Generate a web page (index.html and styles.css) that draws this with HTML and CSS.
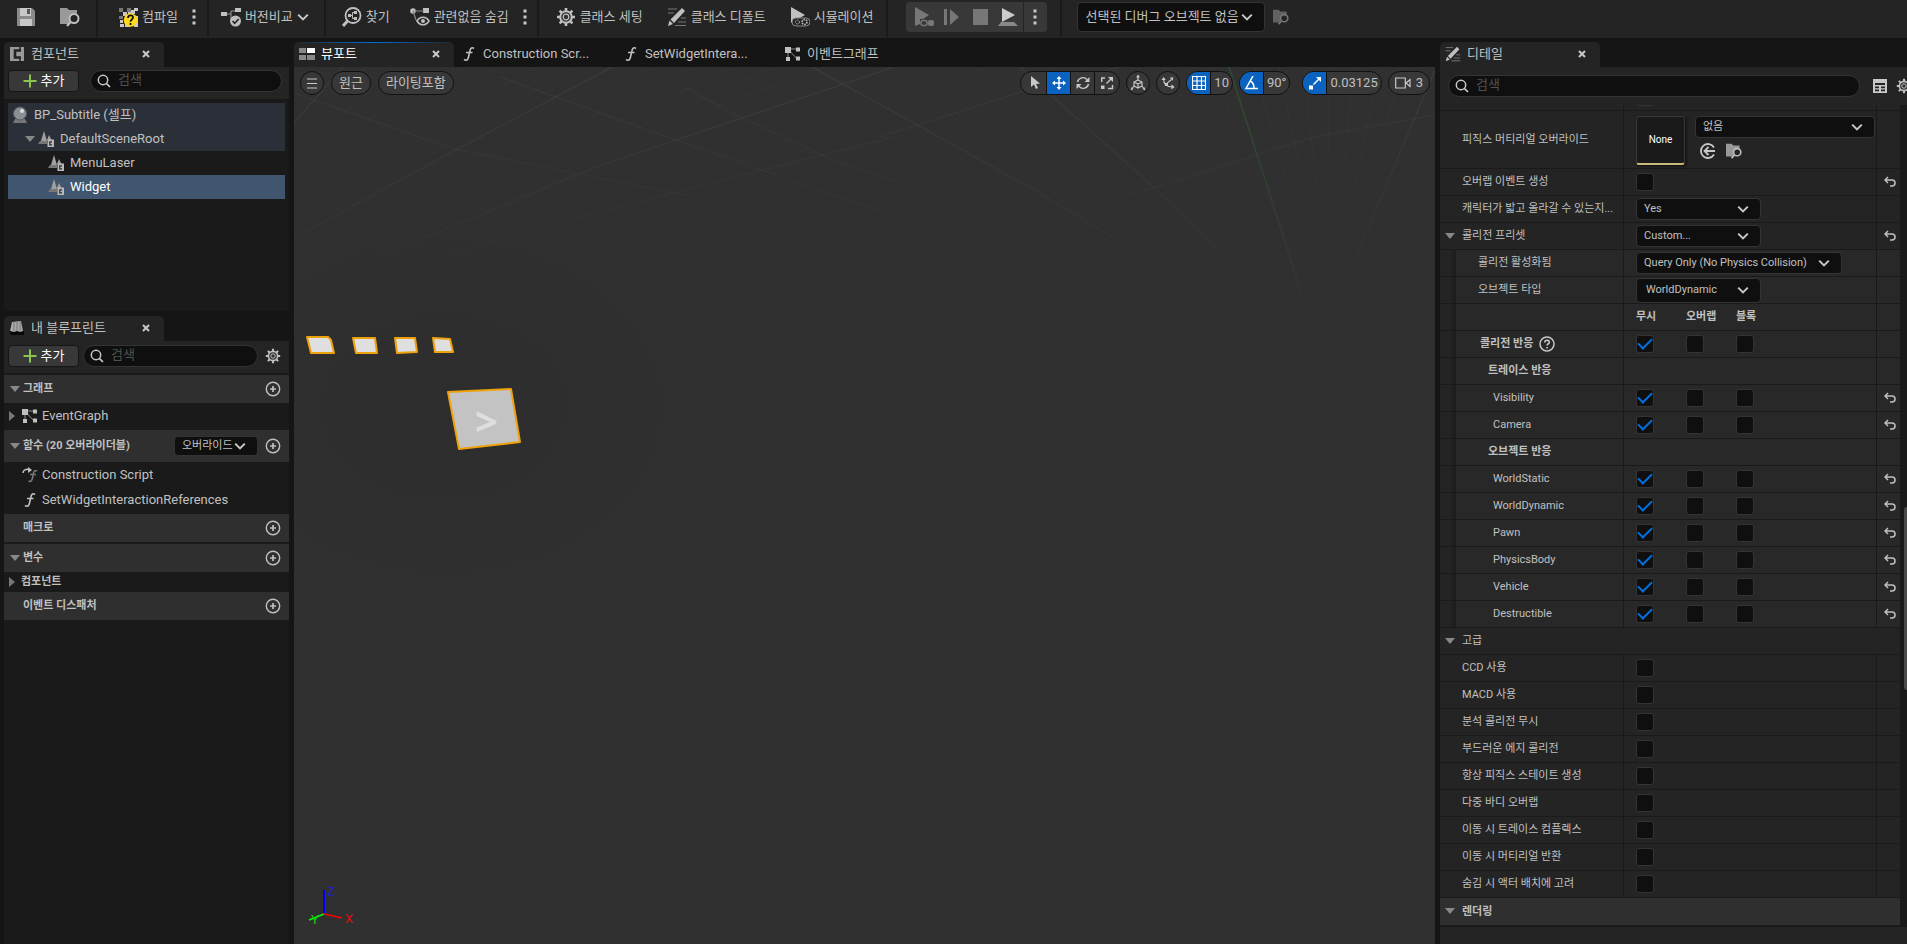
FILE: index.html
```html
<!DOCTYPE html>
<html lang="ko">
<head>
<meta charset="utf-8">
<title>BP_Subtitle</title>
<link rel="stylesheet" href="styles.css">
</head>
<body>
<svg class="defs" aria-hidden="true">
  <symbol id="save" viewBox="0 0 20 20"><path d="M1 1h15l3 3v15H1z" fill="#8a8a8a"/><path d="M4 1h11v8H4zM4 12h12v7H4z" fill="#c8c8c8"/><path d="M11 2h3v5h-3z" fill="#555"/></symbol>
  <symbol id="browse" viewBox="0 0 20 20"><path d="M0 1h7l2 2h8v4a6 6 0 0 0-7 9l-1 1H0z" fill="currentColor" opacity=".75"/><circle cx="14" cy="11.500" r="4.500" fill="#242424" stroke="currentColor" stroke-width="2"/><path d="M10.500 15 7 19" stroke="currentColor" stroke-width="2.200"/></symbol>
  <symbol id="compile" viewBox="0 0 20 20"><path d="M1 1h4v4H1zM9 1h4v4H9zM1 9h4v3H1z" fill="#777"/><path d="M5 5h4v4H5zM13 3h4v4h-4zM16 1h4v3h-4zM16 9h4v11h-4zM2 17h4v3H2zM7 16h5v4H7zM2 13h3v3H2zM10 5h3v3h-3z" fill="#c8c8c8"/><circle cx="12.500" cy="13" r="6.800" fill="#ffd91a"/><path d="M10 11c0-3.500 5-3.500 5-.5 0 2-2.500 2-2.500 4.200M12.500 16v2" fill="none" stroke="#111" stroke-width="1.800"/></symbol>
  <symbol id="diff" viewBox="0 0 20 20"><path d="M5 7h5V4h5M10 7v5" fill="none" stroke="#999"/><path d="M0 5h6v4H0zM14 1h6v4h-6z" fill="currentColor"/><circle cx="14.500" cy="14" r="5.500" fill="currentColor"/><path d="m11.500 14 2.200 2.300 4-4.300" fill="none" stroke="#222" stroke-width="1.700"/></symbol>
  <symbol id="find" viewBox="0 0 20 20"><circle cx="11" cy="8.500" r="7.500" fill="none" stroke="currentColor" stroke-width="1.800"/><path d="M5.500 14 1 19" stroke="currentColor" stroke-width="3"/><path d="M6 7h3v3H6zM12 4h3v3h-3zM12 10h3v3h-3z" fill="currentColor"/><path d="M8 8.500h2.500v-3H13M10.500 8.500v3H13" fill="none" stroke="currentColor"/></symbol>
  <symbol id="hide" viewBox="0 0 20 20"><circle cx="3" cy="4" r="2.800" fill="currentColor"/><path d="M13 1h6v5h-6z" fill="currentColor"/><path d="M3 4h11M3 4l3 9" stroke="#888" stroke-width="1.200"/><path d="M7 14c3-5 9-5 12 0-3 5-9 5-12 0z" fill="#242424" stroke="currentColor" stroke-width="1.600"/><circle cx="13" cy="14" r="2" fill="currentColor"/></symbol>
  <symbol id="gear" viewBox="0 0 20 20"><g stroke="currentColor" stroke-width="2.600"><path d="M10 1v18M1 10h18M3.600 3.600l12.800 12.800M16.400 3.600 3.600 16.400"/></g><circle cx="10" cy="10" r="5.800" fill="#333" stroke="currentColor" stroke-width="2"/><circle cx="10" cy="10" r="2.800" fill="none" stroke="currentColor" stroke-width="1.200"/></symbol>
  <symbol id="pencil" viewBox="0 0 20 20"><path d="M1 2h9M1 6h6M14 11h5M11 15h8M8 18.500h11" stroke="#777" stroke-width="1.200"/><path d="M15 1l3 3L7 16l-3.500-3.500z" fill="currentColor"/><path d="M2.500 13.500 6 17l-5 2z" fill="currentColor"/></symbol>
  <symbol id="simulate" viewBox="0 0 20 20"><path d="M1 0l14 8-14 8z" fill="currentColor"/><rect x="2" y="11" width="18" height="8" rx="4" fill="#242424" stroke="#888"/><g fill="none" stroke="currentColor"><circle cx="7.500" cy="15" r="2" stroke-dasharray="1.600 1"/><circle cx="14.500" cy="15" r="2.500" stroke-dasharray="1.600 1" stroke-width="1.500"/></g></symbol>
  <symbol id="play" viewBox="0 0 20 20"><path d="M1 0l14 8-6 4H6v5l-5 2z" fill="#777"/><rect x="7" y="13.500" width="6" height="5" rx="2" fill="#383838" stroke="#777" stroke-width="1.500"/><rect x="14" y="13" width="6" height="6" rx="2" fill="#777"/></symbol>
  <symbol id="step" viewBox="0 0 20 20"><path d="M2 2h3v16H2zM8 2l9 8-9 8z" fill="#777"/></symbol>
  <symbol id="stop" viewBox="0 0 20 20"><path d="M3 2h15v16H3z" fill="#777"/></symbol>
  <symbol id="eject" viewBox="0 0 20 20"><path d="M4 1l13 7-13 7z" fill="#ccc"/><path d="M0 19l3-4h13l4 4z" fill="#888"/></symbol>
  <symbol id="dots" viewBox="0 0 4 20"><path d="M.5 2.500h3v3h-3zM.5 8.500h3v3h-3zM.5 14.500h3v3h-3z" fill="#c8c8c8"/></symbol>
  <symbol id="chev" viewBox="0 0 10 10"><path d="M1 3l4 4 4-4" fill="none" stroke="#c8c8c8" stroke-width="1.700"/></symbol>
  <symbol id="x" viewBox="0 0 8 8"><path d="M1 1l6 6M7 1 1 7" stroke="#c8c8c8" stroke-width="2"/></symbol>
  <symbol id="comp" viewBox="0 0 16 16"><path d="M1 1h14v14H1z" fill="#999"/><path d="M12 4.500H6v7h6" fill="none" stroke="#242424" stroke-width="2.600"/><path d="M11 0v5M11 11v5" stroke="#242424" stroke-width="1.500"/></symbol>
  <symbol id="book" viewBox="0 0 16 16"><path d="M0 11h15v4H2z" fill="#080808"/><path d="M3 2l9-1 2 10-3 1-3-1-3 1-4-1z" fill="#aaa"/><path d="M5 2v9M8 1.500V11M11 1.500V11" stroke="#777"/></symbol>
  <symbol id="view" viewBox="0 0 16 16"><path d="M0 2h7v5H0zM0 9h7v5H0zM8 9h8v5H8z" fill="#888"/><path d="M8 2h8v5H8z" fill="#fff"/></symbol>
  <symbol id="func" viewBox="0 0 16 16"><path d="M13 2.500c-2-1.500-3.500-.5-4 2L7.500 11c-.5 3-2 4-4.500 2.500M5 6.500h6.500" fill="none" stroke="currentColor" stroke-width="1.600"/></symbol>
  <symbol id="cfunc" viewBox="0 0 16 16"><path d="M15 4c-2-1-3 0-3.500 2l-1 5c-.5 3-2 4-4 3M8 7.500h6" fill="none" stroke="#777" stroke-width="1.600"/><path d="M1 6c0-3 3-4 6-3.500" fill="none" stroke="currentColor" stroke-width="1.500"/><path d="M6 0l4 3-4 3z" fill="currentColor"/></symbol>
  <symbol id="graph" viewBox="0 0 16 16"><path d="M3 3h10M3 3l9 10M3 3v10" stroke="#888"/><path d="M0 1h6v6H0zM11 1.500h4v4h-4zM1 11h4v4H1zM11 10.500h4v4h-4z" fill="currentColor"/></symbol>
  <symbol id="search" viewBox="0 0 14 14"><circle cx="6" cy="6" r="4.700" fill="none" stroke="#c8c8c8" stroke-width="1.500"/><path d="M9.300 9.300 13 13" stroke="#c8c8c8" stroke-width="1.700"/></symbol>
  <symbol id="plus" viewBox="0 0 14 14"><path d="M7 0.500v13M.5 7h13" stroke="#8bc44a" stroke-width="2"/></symbol>
  <symbol id="add" viewBox="0 0 16 16"><circle cx="8" cy="8" r="6.700" fill="none" stroke="#c0c0c0" stroke-width="1.400"/><path d="M8 5v6M5 8h6" stroke="#c0c0c0" stroke-width="1.700"/></symbol>
  <symbol id="actor" viewBox="0 0 16 18"><path d="M1 17h14l-2-4H3z" fill="#777"/><circle cx="8" cy="7.500" r="6.500" fill="#8a8f94" stroke="#555b60"/><circle cx="10" cy="5" r="2" fill="#ddd"/></symbol>
  <symbol id="scene" viewBox="0 0 16 16"><path d="M0 13l2-3h7v3z" fill="#777"/><path d="M6 0l3 10H3zM11 4l2.500 5H9z" fill="#a0a0a0"/><path d="M9.500 8.500h6.500V16H9.500z" fill="#b8b8b8"/><path d="M14 10.800h-2.200v3H14" fill="none" stroke="#252b33" stroke-width="1.200"/></symbol>
  <symbol id="down" viewBox="0 0 10 8"><path d="M0 1h10L5 7z" fill="#888"/></symbol>
  <symbol id="right" viewBox="0 0 8 10"><path d="M1 0l6 5-6 5z" fill="#777"/></symbol>
  <symbol id="menu" viewBox="0 0 14 14"><path d="M2 3h10M2 7.500h10M2 12h10" stroke="#c8c8c8" stroke-width="1.100"/></symbol>
  <symbol id="cursor" viewBox="0 0 14 14"><path d="M3 0v11l3-2.500L8 13l2-1-2-4 4-.5z" fill="#c8c8c8"/></symbol>
  <symbol id="move" viewBox="0 0 14 14"><path d="M7 2v10M2 7h10" stroke="#fff" stroke-width="1.500"/><path d="M7 0 4.500 3h5zM7 14l-2.500-3h5zM0 7l3-2.500v5zM14 7l-3-2.500v5z" fill="#fff"/></symbol>
  <symbol id="rotate" viewBox="0 0 14 14"><path d="M1.500 6A5.500 5.500 0 0 1 11 3.500M12.500 8A5.500 5.500 0 0 1 3 10.500" fill="none" stroke="#c8c8c8" stroke-width="1.400"/><path d="M13.500 1v5h-5zM.5 13V8h5z" fill="#c8c8c8"/></symbol>
  <symbol id="scale" viewBox="0 0 14 14"><path d="M8 1h5v5zM1 9.500h3.500V13H1z" fill="#c8c8c8"/><path d="M6.500 7.500l5-5M1.700 6V2H5M12.500 9v3.500H8" fill="none" stroke="#c8c8c8" stroke-width="1.400"/></symbol>
  <symbol id="world" viewBox="0 0 16 16"><path d="M8 0v5M8 5l4 2v4l-4 2-4-2V7zM4 7l4 2 4-2M8 9v4M4 11l-3 4M12 11l3 4" fill="none" stroke="#c8c8c8" stroke-width="1.200"/><path d="M6 2.500 8 0l2 2.500zM1 15l.5-3 2 2zM15 15l-.5-3-2 2z" fill="#c8c8c8"/></symbol>
  <symbol id="surf" viewBox="0 0 16 16"><path d="M3 3c0 6 3 9.500 10 9.500M6 9l6-5" fill="none" stroke="#c8c8c8" stroke-width="1.300"/><path d="M0.500 4.500l2.500-3.500 2.500 3.500zM12 9.500l3.500 3-3.500 3zM10 2l4-.5-.5 4zM4.500 8h3.500v3.500H4.500z" fill="#c8c8c8"/></symbol>
  <symbol id="grid" viewBox="0 0 14 14"><path d="M.5.5h13v13H.5zM5 0v14M9.500 0v14M0 5h14M0 9.500h14" fill="none" stroke="#fff" stroke-width="1.200"/></symbol>
  <symbol id="angle" viewBox="0 0 14 14"><path d="M9 0 2 12.500h12M6 5c3 1 4 4 4 7" fill="none" stroke="#fff" stroke-width="1.500"/></symbol>
  <symbol id="snap" viewBox="0 0 14 14"><path d="M8 1h5v5zM1 9.500h4v4H1z" fill="#fff"/><path d="M5.500 8.500l6-6" stroke="#fff" stroke-width="1.500"/></symbol>
  <symbol id="cam" viewBox="0 0 16 14"><path d="M.7 2h9.600v10H.7zM11 7l4-3.500v7z" fill="none" stroke="#c8c8c8" stroke-width="1.200"/></symbol>
  <symbol id="table" viewBox="0 0 14 14"><path d="M0 0h14v14H0z" fill="#c8c8c8"/><path d="M2 4h10v2H2zM2 7.500h4v1.700H2zM8 7.500h4v1.700H8zM2 10.500h4v1.700H2zM8 10.500h4v1.700H8z" fill="#242424"/></symbol>
  <symbol id="use" viewBox="0 0 16 16"><path d="M14 4.500a7 7 0 1 0 0 7M15 8H5M8.500 4 4.500 8l4 4" fill="none" stroke="#c8c8c8" stroke-width="1.800"/></symbol>
  <symbol id="undo" viewBox="0 0 12 12"><path d="M1 4h7a3 3 0 0 1 0 6H6M4 1 1 4l3 3" fill="none" stroke="#c0c0c0" stroke-width="1.500"/></symbol>
  <symbol id="help" viewBox="0 0 16 16"><circle cx="8" cy="8" r="7" fill="none" stroke="#c8c8c8" stroke-width="1.500"/><path d="M5.800 6.500c0-3 4.500-3 4.500-.3 0 1.600-2.200 1.500-2.200 3.300M8.100 11v1.600" fill="none" stroke="#c8c8c8" stroke-width="1.600"/></symbol>
</svg>

<header class="toolbar">
  <div class="group g-file">
    <button aria-label="저장"><svg class="i20"><use href="#save"/></svg></button>
    <button aria-label="찾아보기"><svg class="i20"><use href="#browse"/></svg></button>
  </div>
  <div class="group g-compile">
    <button><svg class="i20"><use href="#compile"/></svg>컴파일</button>
    <button aria-label="컴파일 옵션"><svg class="dots"><use href="#dots"/></svg></button>
  </div>
  <div class="group g-diff">
    <button><svg class="i20"><use href="#diff"/></svg>버전비교<svg class="i12"><use href="#chev"/></svg></button>
  </div>
  <div class="group g-find">
    <button><svg class="i20"><use href="#find"/></svg>찾기</button>
    <button><svg class="i20"><use href="#hide"/></svg>관련없음 숨김</button>
    <button class="near" aria-label="숨김 옵션"><svg class="dots"><use href="#dots"/></svg></button>
  </div>
  <div class="group g-class">
    <button><svg class="i20"><use href="#gear"/></svg>클래스 세팅</button>
    <button><svg class="i20"><use href="#pencil"/></svg>클래스 디폴트</button>
    <button><svg class="i20"><use href="#simulate"/></svg>시뮬레이션</button>
  </div>
  <div class="group g-play">
    <div class="playbox">
      <button aria-label="플레이"><svg class="i20"><use href="#play"/></svg></button>
      <button aria-label="스텝"><svg class="i20"><use href="#step"/></svg></button>
      <button aria-label="중지"><svg class="i20"><use href="#stop"/></svg></button>
      <button aria-label="꺼내기"><svg class="i20"><use href="#eject"/></svg></button>
      <button class="opts" aria-label="플레이 옵션"><svg class="dots"><use href="#dots"/></svg></button>
    </div>
  </div>
  <div class="group g-debug">
    <span class="combo debug"><select aria-label="디버그 오브젝트"><option>선택된 디버그 오브젝트 없음</option></select><svg><use href="#chev"/></svg></span>
    <button class="dim" aria-label="디버그 찾아보기"><svg class="i16"><use href="#browse"/></svg></button>
  </div>
</header>

<main class="work">
  <aside class="left">
    <section class="panel components">
      <div class="tabs"><div class="tab on"><svg class="i16"><use href="#comp"/></svg><span>컴포넌트</span><button aria-label="닫기"><svg class="i8"><use href="#x"/></svg></button></div></div>
      <div class="bar">
        <button class="addbtn"><svg class="i14"><use href="#plus"/></svg>추가</button>
        <label class="search"><svg class="i14"><use href="#search"/></svg><input type="text" placeholder="검색" aria-label="컴포넌트 검색"></label>
      </div>
      <ul class="tree">
        <li class="tint"><svg class="actor"><use href="#actor"/></svg>BP_Subtitle (셀프)</li>
        <li class="tint lv1"><svg class="i10"><use href="#down"/></svg><svg class="i16"><use href="#scene"/></svg>DefaultSceneRoot</li>
        <li class="lv2"><svg class="i16"><use href="#scene"/></svg>MenuLaser</li>
        <li class="lv2 sel"><svg class="i16"><use href="#scene"/></svg>Widget</li>
      </ul>
    </section>
    <section class="panel blueprint">
      <div class="tabs"><div class="tab on"><svg class="i16"><use href="#book"/></svg><span>내 블루프린트</span><button aria-label="닫기"><svg class="i8"><use href="#x"/></svg></button></div></div>
      <div class="bar">
        <button class="addbtn"><svg class="i14"><use href="#plus"/></svg>추가</button>
        <label class="search"><svg class="i14"><use href="#search"/></svg><input type="text" placeholder="검색" aria-label="블루프린트 검색"></label>
        <button class="cog" aria-label="설정"><svg class="i16"><use href="#gear"/></svg></button>
      </div>
      <div class="list">
        <div class="cat"><svg class="i10"><use href="#down"/></svg><b>그래프</b><button aria-label="그래프 추가"><svg class="i16"><use href="#add"/></svg></button></div>
        <div class="item first"><svg class="i10"><use href="#right"/></svg><svg class="i16"><use href="#graph"/></svg>EventGraph</div>
        <div class="cat tall"><svg class="i10"><use href="#down"/></svg><b>함수 (20 오버라이더블)</b><span class="combo override"><select aria-label="오버라이드"><option>오버라이드</option></select><svg><use href="#chev"/></svg></span><button aria-label="함수 추가"><svg class="i16"><use href="#add"/></svg></button></div>
        <div class="item"><i></i><svg class="i16"><use href="#cfunc"/></svg>Construction Script</div>
        <div class="item last"><i></i><svg class="i16"><use href="#func"/></svg>SetWidgetInteractionReferences</div>
        <div class="cat"><i></i><b>매크로</b><button aria-label="매크로 추가"><svg class="i16"><use href="#add"/></svg></button></div>
        <div class="cat gap"><svg class="i10"><use href="#down"/></svg><b>변수</b><button aria-label="변수 추가"><svg class="i16"><use href="#add"/></svg></button></div>
        <div class="item short"><svg class="i10"><use href="#right"/></svg><b>컴포넌트</b></div>
        <div class="cat"><i></i><b>이벤트 디스패처</b><button aria-label="디스패처 추가"><svg class="i16"><use href="#add"/></svg></button></div>
      </div>
    </section>
  </aside>

  <section class="center">
    <div class="tabs">
      <div class="tab on lit"><svg class="i16"><use href="#view"/></svg><span>뷰포트</span><button aria-label="닫기"><svg class="i8"><use href="#x"/></svg></button></div>
      <div class="tab"><svg class="i16"><use href="#func"/></svg><span>Construction Scr...</span></div>
      <div class="tab"><svg class="i16"><use href="#func"/></svg><span>SetWidgetIntera...</span></div>
      <div class="tab"><svg class="i16"><use href="#graph"/></svg><span>이벤트그래프</span></div>
    </div>
    <div class="viewport">
      <svg class="scenery" viewBox="0 0 1141 877" preserveAspectRatio="xMinYMin slice" aria-hidden="true">
        <defs>
          <linearGradient id="fade" gradientUnits="userSpaceOnUse" x1="0" y1="0" x2="0" y2="250"><stop offset="0" stop-color="#fff" stop-opacity=".045"/><stop offset="1" stop-color="#fff" stop-opacity="0"/></linearGradient>
          <linearGradient id="green" gradientUnits="userSpaceOnUse" x1="0" y1="0" x2="0" y2="240"><stop offset="0" stop-color="#2f6b30" stop-opacity=".5"/><stop offset="1" stop-color="#2f6b30" stop-opacity=".05"/></linearGradient>
          <radialGradient id="shade"><stop offset="0" stop-color="#000" stop-opacity=".07"/><stop offset="1" stop-color="#000" stop-opacity="0"/></radialGradient>
        </defs>
        <ellipse cx="150" cy="340" rx="260" ry="200" fill="url(#shade)"/>
        <g fill="none" stroke="url(#fade)">
          <path d="M49 0 0 56M318 0 143 93 0 171M600 0 302 100 84 190M518 0l82 45 146 81 180 110M726 0l129 116 123 117M1141 3l-97 230" stroke-width="1.500"/>
          <path d="M600 70 452 107 210 170 0 240M206 10l170 61 230 80M0 26l160 56 240 48M390 20l54 29 92 43 64 22M586 70l150-48 90-22M830 130l190-60 121-22"/>
          <path d="M100 0 0 95M135 0 0 118M170 0 20 110M205 0 60 100M240 0 90 95M280 0 130 92M360 0 190 86M400 0 230 82M440 0 260 85M480 0 300 80M530 0 400 48M760 0l190 210M790 0l170 205M820 0l150 200M845 0l135 200M870 0l120 200M895 0l105 200M915 0l90 200M960 0l60 210M985 0l42 210M1010 0l22 210M1035 0l0 210M1060 0l-20 200M1085 0l-40 200M1110 0l-60 190M620 20l170 130M650 10l170 130M680 0l190 150" opacity=".5"/>
        </g>
        <path d="M935 0l74 231" stroke="url(#green)" stroke-width="1.500"/>
        <g fill="#dfdfdf" stroke="#eda20c" stroke-width="2" stroke-linejoin="round">
          <path d="M13 270h21l3 3 3 13H17zM59 271h22l2 15H62zM101 271h20l2 14-20 1zM139 271l17 1 3 13h-18z"/>
          <path d="M154 325l63-3 9 53-61 7z" fill="#c3c3c3"/>
        </g>
        <text class="sign" x="181" y="369">&gt;</text>
      </svg>
      <svg class="axes" viewBox="0 0 50 50" aria-hidden="true">
        <path d="M18 30V6" stroke="#00f" stroke-width="2"/><path d="M18 30l18 4" stroke="red" stroke-width="1.500"/><path d="M18 30 3 36" stroke="lime" stroke-width="1.500"/>
        <text x="21" y="12" fill="#2222c8">Z</text><text x="39" y="39" fill="#d11">X</text><text x="5" y="40" fill="#1c1">Y</text>
      </svg>
      <div class="vbar">
        <button class="pill round" aria-label="뷰포트 메뉴"><svg class="i14"><use href="#menu"/></svg></button>
        <button class="pill txt">원근</button>
        <button class="pill txt">라이팅포함</button>
        <span class="spring"></span>
        <div class="pill seg">
          <button class="lead" aria-label="선택"><svg class="i14"><use href="#cursor"/></svg></button>
          <button class="blue" aria-label="이동"><svg class="i14"><use href="#move"/></svg></button>
          <button aria-label="회전"><svg class="i14"><use href="#rotate"/></svg></button>
          <button aria-label="스케일"><svg class="i14"><use href="#scale"/></svg></button>
        </div>
        <button class="pill round" aria-label="월드 좌표"><svg class="i16"><use href="#world"/></svg></button>
        <button class="pill round" aria-label="표면 스냅"><svg class="i14"><use href="#surf"/></svg></button>
        <div class="pill seg"><button class="blue" aria-label="그리드 스냅"><svg class="i14"><use href="#grid"/></svg></button><button class="num">10</button></div>
        <div class="pill seg"><button class="blue" aria-label="회전 스냅"><svg class="i14"><use href="#angle"/></svg></button><button class="num">90°</button></div>
        <div class="pill seg far"><button class="blue" aria-label="스케일 스냅"><svg class="i14"><use href="#snap"/></svg></button><button class="num">0.03125</button></div>
        <button class="pill txt camera"><svg class="i16"><use href="#cam"/></svg>3</button>
      </div>
    </div>
  </section>

  <aside class="details">
    <div class="tabs"><div class="tab on"><svg class="i16"><use href="#pencil"/></svg><span>디테일</span><button aria-label="닫기"><svg class="i8"><use href="#x"/></svg></button></div></div>
    <div class="bar">
      <label class="search"><svg class="i14"><use href="#search"/></svg><input type="text" placeholder="검색" aria-label="디테일 검색"></label>
      <button aria-label="표로 보기"><svg class="i14"><use href="#table"/></svg></button>
      <button class="cut" aria-label="설정"><svg class="i16"><use href="#gear"/></svg></button>
    </div>
    <div class="scroll">
      <div class="props">
        <div class="row peek"><span></span><div><input type="checkbox" aria-label="이전 속성"></div><span></span></div>
        <div class="row asset"><span>피직스 머티리얼 오버라이드</span>
          <div><div class="thumb">None</div><div class="pick"><span class="combo"><select aria-label="피직스 머티리얼 오버라이드"><option>없음</option></select><svg><use href="#chev"/></svg></span><p><button aria-label="선택 항목 사용"><svg class="i16"><use href="#use"/></svg></button><button aria-label="찾아보기"><svg class="i16"><use href="#browse"/></svg></button></p></div></div><span></span></div>
        <div class="row"><label for="p1">오버랩 이벤트 생성</label><div><input type="checkbox" id="p1"></div><button aria-label="초기화"><svg class="i12"><use href="#undo"/></svg></button></div>
        <div class="row"><label for="p2">캐릭터가 밟고 올라갈 수 있는지...</label><div><span class="combo mid"><select id="p2"><option>Yes</option></select><svg><use href="#chev"/></svg></span></div><span></span></div>
        <div class="row open"><svg class="i10"><use href="#down"/></svg><label for="p3">콜리전 프리셋</label><div><span class="combo mid"><select id="p3"><option>Custom...</option></select><svg><use href="#chev"/></svg></span></div><button aria-label="초기화"><svg class="i12"><use href="#undo"/></svg></button></div>
        <div class="nest">
          <div class="row"><label for="p4">콜리전 활성화됨</label><div><span class="combo wide"><select id="p4"><option>Query Only (No Physics Collision)</option></select><svg><use href="#chev"/></svg></span></div><span></span></div>
          <div class="row"><label for="p5">오브젝트 타입</label><div><span class="combo mid big"><select id="p5"><option>WorldDynamic</option></select><svg><use href="#chev"/></svg></span></div><span></span></div>
          <div class="row strong"><span></span><div class="tri"><span>무시</span><span>오버랩</span><span>블록</span></div><span></span></div>
          <div class="row strong in0"><span>콜리전 반응<svg class="i16"><use href="#help"/></svg></span><div class="tri"><input type="checkbox" checked aria-label="모두 무시"><input type="checkbox" aria-label="모두 오버랩"><input type="checkbox" aria-label="모두 블록"></div><span></span></div>
          <div class="row strong in1"><span>트레이스 반응</span><div></div><span></span></div>
          <div class="row in2"><span>Visibility</span><div class="tri"><input type="checkbox" checked aria-label="Visibility 무시"><input type="checkbox" aria-label="Visibility 오버랩"><input type="checkbox" aria-label="Visibility 블록"></div><button aria-label="초기화"><svg class="i12"><use href="#undo"/></svg></button></div>
          <div class="row in2"><span>Camera</span><div class="tri"><input type="checkbox" checked aria-label="Camera 무시"><input type="checkbox" aria-label="Camera 오버랩"><input type="checkbox" aria-label="Camera 블록"></div><button aria-label="초기화"><svg class="i12"><use href="#undo"/></svg></button></div>
          <div class="row strong in1"><span>오브젝트 반응</span><div></div><span></span></div>
          <div class="row in2"><span>WorldStatic</span><div class="tri"><input type="checkbox" checked aria-label="WorldStatic 무시"><input type="checkbox" aria-label="WorldStatic 오버랩"><input type="checkbox" aria-label="WorldStatic 블록"></div><button aria-label="초기화"><svg class="i12"><use href="#undo"/></svg></button></div>
          <div class="row in2"><span>WorldDynamic</span><div class="tri"><input type="checkbox" checked aria-label="WorldDynamic 무시"><input type="checkbox" aria-label="WorldDynamic 오버랩"><input type="checkbox" aria-label="WorldDynamic 블록"></div><button aria-label="초기화"><svg class="i12"><use href="#undo"/></svg></button></div>
          <div class="row in2"><span>Pawn</span><div class="tri"><input type="checkbox" checked aria-label="Pawn 무시"><input type="checkbox" aria-label="Pawn 오버랩"><input type="checkbox" aria-label="Pawn 블록"></div><button aria-label="초기화"><svg class="i12"><use href="#undo"/></svg></button></div>
          <div class="row in2"><span>PhysicsBody</span><div class="tri"><input type="checkbox" checked aria-label="PhysicsBody 무시"><input type="checkbox" aria-label="PhysicsBody 오버랩"><input type="checkbox" aria-label="PhysicsBody 블록"></div><button aria-label="초기화"><svg class="i12"><use href="#undo"/></svg></button></div>
          <div class="row in2"><span>Vehicle</span><div class="tri"><input type="checkbox" checked aria-label="Vehicle 무시"><input type="checkbox" aria-label="Vehicle 오버랩"><input type="checkbox" aria-label="Vehicle 블록"></div><button aria-label="초기화"><svg class="i12"><use href="#undo"/></svg></button></div>
          <div class="row in2"><span>Destructible</span><div class="tri"><input type="checkbox" checked aria-label="Destructible 무시"><input type="checkbox" aria-label="Destructible 오버랩"><input type="checkbox" aria-label="Destructible 블록"></div><button aria-label="초기화"><svg class="i12"><use href="#undo"/></svg></button></div>
        </div>
        <div class="row head"><svg class="i10"><use href="#down"/></svg><span>고급</span></div>
        <div class="row"><label for="a1">CCD 사용</label><div><input type="checkbox" id="a1"></div><span></span></div>
        <div class="row"><label for="a2">MACD 사용</label><div><input type="checkbox" id="a2"></div><span></span></div>
        <div class="row"><label for="a3">분석 콜리전 무시</label><div><input type="checkbox" id="a3"></div><span></span></div>
        <div class="row"><label for="a4">부드러운 에지 콜리전</label><div><input type="checkbox" id="a4"></div><span></span></div>
        <div class="row"><label for="a5">항상 피직스 스테이트 생성</label><div><input type="checkbox" id="a5"></div><span></span></div>
        <div class="row"><label for="a6">다중 바디 오버랩</label><div><input type="checkbox" id="a6"></div><span></span></div>
        <div class="row"><label for="a7">이동 시 트레이스 컴플렉스</label><div><input type="checkbox" id="a7"></div><span></span></div>
        <div class="row"><label for="a8">이동 시 머티리얼 반환</label><div><input type="checkbox" id="a8"></div><span></span></div>
        <div class="row"><label for="a9">숨김 시 액터 배치에 고려</label><div><input type="checkbox" id="a9"></div><span></span></div>
        <div class="row head cat2"><svg class="i10"><use href="#down"/></svg><span>렌더링</span></div>
      </div>
      <div class="thumbbar"></div>
    </div>
    <div class="foot"></div>
  </aside>
</main>
</body>
</html>
```
FILE: styles.css
```css
* { box-sizing: border-box; }
body {
  margin: 0;
  height: 100vh;
  display: flex;
  flex-direction: column;
  overflow: hidden;
  background: #151515;
  color: #c0c0c0;
  font: 13px/16px Roboto, "Noto Sans CJK KR", sans-serif;
  white-space: nowrap;
}
.defs { display: none; }
svg { display: block; flex: none; }
button, input, select { font: inherit; color: inherit; margin: 0; }
button {
  display: flex;
  flex: none;
  align-items: center;
  justify-content: center;
  gap: 4px;
  padding: 0;
  border: 0;
  background: none;
}
.i8 { width: 8px; height: 8px; }
.i10 { width: 10px; height: 10px; }
.i12 { width: 12px; height: 12px; }
.i14 { width: 14px; height: 14px; }
.i16 { width: 16px; height: 16px; }
.i20 { width: 20px; height: 20px; }
.dots { width: 4px; height: 20px; }

/* toolbar */
.toolbar { display: flex; flex: none; height: 38px; background: #242424; padding-bottom: 1px; }
.group { display: flex; align-items: center; gap: 24px; padding-bottom: 3px; border-right: 2px solid #1a1a1a; }
.g-file { padding-left: 16px; padding-right: 16px; }
.g-compile { gap: 14px; padding-left: 20px; padding-right: 11px; }
.g-diff { padding-left: 12px; padding-right: 15px; }
.g-find { gap: 20px; padding-left: 16px; padding-right: 10px; }
.g-find .near { margin-left: -6px; }
.g-class { gap: 24px; padding-left: 17px; padding-right: 12px; }
.g-play { padding-left: 18px; padding-right: 13px; }
.g-debug { gap: 8px; padding-left: 15px; border: 0; }
.playbox { display: flex; gap: 8px; height: 30px; padding-left: 8px; border-radius: 4px; background: #383838; }
.playbox .opts { width: 24px; border-left: 1px solid #242424; margin-left: -3px; }
.dim { color: #777; }

/* drop-downs */
.combo { display: grid; align-items: center; height: 22px; }
.combo select, .combo svg { grid-area: 1 / 1; }
.combo select {
  appearance: none;
  width: 100%;
  height: 100%;
  padding: 0 24px 0 7px;
  border: 1px solid #343434;
  border-radius: 4px;
  background: #0f0f0f;
}
.combo svg { width: 12px; height: 12px; justify-self: end; margin-right: 12px; pointer-events: none; }
.debug { width: 188px; height: 30px; }
.debug select { padding-left: 8px; }

/* panels and tabs */
.work { flex: 1; min-height: 0; display: grid; grid-template-columns: 285px minmax(0, 1fr) 467px; gap: 5px; padding-left: 4px; }
.left, .center, .details { min-width: 0; min-height: 0; display: flex; flex-direction: column; }
.tabs { display: flex; flex: none; gap: 2px; padding-top: 4px; }
.tab { display: flex; align-items: center; gap: 6px; width: 160px; height: 25px; padding: 0 14px 1px 5px; border-radius: 5px 5px 0 0; }
.tab span { flex: 1; }
.tab.on { background: #242424; }
.tab.lit { color: #fff; background: linear-gradient(90deg, #242424, #0070e0, #242424) 0 0 / 100% 1px no-repeat #242424; }
.bar { display: flex; align-items: center; }
.search { flex: 1; min-width: 0; display: flex; align-items: center; gap: 7px; height: 22px; padding: 0 6px; border: 1px solid #343434; border-radius: 11px; background: #0f0f0f; }
.search input { flex: 1; width: 0; min-width: 0; padding: 0 0 2px; border: 0; outline: 0; background: none; }
.search input::placeholder { color: #505050; opacity: 1; }
.addbtn { width: 71px; height: 22px; border: 1px solid #151515; border-radius: 4px; background: #383838; color: #fff; }

.components { height: 273px; flex: none; display: flex; flex-direction: column; }
.components .bar { gap: 11px; height: 32px; padding: 0 7px 4px 4px; background: #242424; }
.tree { flex: 1; margin: 0; padding: 4px; list-style: none; background: #1a1a1a; border-radius: 4px; }
.tree li { display: flex; align-items: center; gap: 6px; height: 24px; padding-left: 4px; }
.tree .tint { background: #2b3038; }
.tree .lv1 { padding-left: 17px; }
.tree .lv1 .i10 { margin-right: -3px; }
.tree .lv2 { padding-left: 40px; }
.tree .sel { background: #40566f; color: #fff; }
.actor { width: 16px; height: 18px; }

.blueprint { flex: 1; margin-top: 1px; display: flex; flex-direction: column; }
.blueprint .bar { gap: 4px; height: 32px; padding: 0 8px 3px 4px; background: #242424; }
.blueprint .search { margin-right: 3px; }
.list { flex: 1; padding-top: 2px; background: #1a1a1a; }
.cat, .item { display: flex; align-items: center; }
.cat { gap: 7px; height: 28px; padding: 0 8px 0 6px; background: #2f2f2f; font-size: 11px; }
.cat b { flex: 1; margin-left: -4px; }
.cat i, .item i { width: 10px; }
.cat.tall { height: 32px; }
.cat.gap { margin-top: 2px; }
.item { gap: 4px; height: 25px; padding-left: 3px; }
.item.first { height: 27px; padding-bottom: 2px; }
.item.last { height: 27px; padding-bottom: 2px; }
.item svg + svg, .item i + svg { margin-left: 1px; }
.item.short { height: 20px; font-size: 11px; }
.override { width: 84px; height: 20px; }

/* viewport */
.viewport { position: relative; flex: 1; min-height: 0; background: #303030; }
.scenery { position: absolute; inset: 0; width: 100%; height: 100%; }
.sign { font: bold 40px "Open Sans", sans-serif; fill: #dedede; }
.axes { position: absolute; left: 12px; bottom: 10px; width: 50px; height: 50px; font-size: 13px; }
.vbar { position: relative; display: flex; align-items: center; gap: 6px; padding: 4px 5px 4px 6px; }
.spring { flex: 1; }
.pill { height: 24px; border: 1px solid #111; border-radius: 12px; background: #383838; }
.round { width: 24px; }
.txt { padding: 0 7px 1px; margin-left: 1px; }
.seg { display: flex; overflow: hidden; }
.seg button { width: 24px; border-right: 1px solid #111; }
.seg .lead { width: 26px; padding-left: 3px; }
.seg button:last-child { border-right: 0; }
.seg .blue { background: #0b63bf; }
.seg .num { width: auto; padding: 0 3px 1px; }
.far { margin-left: 6px; }
.camera { margin-left: 0; gap: 5px; padding: 0 6px; }

/* details */
.details .bar { height: 38px; gap: 13px; padding: 0 0 1px 8px; background: #242424; }
.details .bar .cut { width: 11px; margin-left: -4px; justify-content: flex-start; overflow: hidden; }
.scroll { display: grid; grid-template-columns: 1fr 7px; background: #1a1a1a; }
.thumbbar { justify-self: end; width: 3px; height: 183px; margin-top: 402px; border-radius: 3px 0 0 3px; background: #4a4a4a; }
.props { font-size: 11px; }
.row { display: grid; grid-template-columns: 184px 1fr 23px; height: 27px; border-bottom: 1px solid #1a1a1a; background: #242424; }
.row > * { display: flex; align-items: center; border-right: 1px solid #1a1a1a; min-width: 0; }
.row > :last-child { border-right: 0; }
.row > button { padding-left: 2px; }
.row > :first-child { padding: 0 0 0 22px; }
.row > div { padding-left: 12px; }
.row.peek { height: 6px; grid-template-rows: 5px; overflow: hidden; }
.row.peek > div { align-items: flex-end; padding-bottom: 4px; }
.row.asset { height: 58px; }
.row.asset > div { gap: 10px; align-items: flex-start; padding: 5px 1px 0 12px; }
.thumb { display: flex; align-items: center; justify-content: center; width: 49px; height: 49px; border: 1px solid #383838; border-bottom: 2px solid #c9b978; border-radius: 3px; background: #1a1a1a; color: #fff; font-size: 10px; box-shadow: 1px 1px 3px #0d0d0d; }
.pick { flex: 1; }
.pick p { display: flex; gap: 10px; margin: 5px 0 0 5px; }
.row.open, .row.head { grid-template-columns: 22px 162px 1fr 23px; }
.row.open > svg, .row.head > svg { width: 10px; height: 10px; margin: 8px 0 0 5px; padding: 0; border: 0; }
.row.head > span { border: 0; }
.row.cat2 { background: #2f2f2f; font-weight: bold; border-bottom: 0; margin-bottom: 2px; }
.mid { width: 125px; }
.wide { width: 206px; }
.big { height: 25px; }
.big select { padding-left: 9px; }
.nest { background: linear-gradient(90deg, #242424 10px, #1c1c1c 16px, #282828 16px); }
.nest .row { background: none; }
.nest .row > :first-child { padding-left: 38px; gap: 6px; }
.nest .in0 > :first-child { padding-left: 40px; }
.nest .in1 > :first-child { padding-left: 48px; }
.nest .in2 > :first-child { padding-left: 53px; }
.strong { font-weight: bold; }
.row > .tri { display: grid; grid-template-columns: 50px 50px 50px; }
input[type="checkbox"] { appearance: none; width: 18px; height: 18px; border: 1px solid #343434; border-radius: 3px; background: #0f0f0f; display: grid; place-items: center; }
input[type="checkbox"]:checked::before { content: ""; width: 12px; height: 6px; border: solid #0070e0; border-width: 0 0 2px 2px; transform: translateY(-2px) rotate(-45deg); }
.foot { flex: 1; background: #242424; }
```
